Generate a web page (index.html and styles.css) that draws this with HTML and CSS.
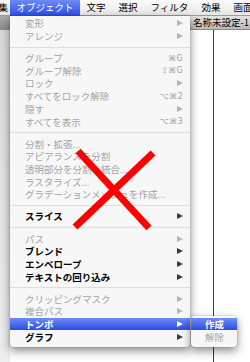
FILE: index.html
```html
<!DOCTYPE html>
<html lang="ja">
<head>
<meta charset="utf-8">
<link rel="stylesheet" href="styles.css">
</head>
<body>
<div class="screen">
  <div class="menubar">
    <span class="mb-item mb-first">編集</span>
    <span class="mb-item mb-active">オブジェクト</span>
    <span class="mb-item">文字</span>
    <span class="mb-item">選択</span>
    <span class="mb-item">フィルタ</span>
    <span class="mb-item">効果</span>
    <span class="mb-item">画面</span>
  </div>
  <div class="desktop">
    <div class="palette">
      <div class="palette-title"></div>
      <div class="palette-body"></div>
    </div>
    <div class="docwin">
      <div class="doc-title">名称未設定-1</div>
      <div class="doc-body"><div class="artboard"></div></div>
    </div>
  </div>

  <div class="menu">
    <div class="row dis"><span class="lbl">変形</span><span class="arr"></span></div>
    <div class="row dis"><span class="lbl">アレンジ</span><span class="arr"></span></div>
    <div class="sep"></div>
    <div class="row dis"><span class="lbl">グループ</span><span class="key">⌘G</span></div>
    <div class="row dis"><span class="lbl">グループ解除</span><span class="key">⇧⌘G</span></div>
    <div class="row dis"><span class="lbl">ロック</span><span class="arr"></span></div>
    <div class="row dis"><span class="lbl">すべてをロック解除</span><span class="key">⌥⌘2</span></div>
    <div class="row dis"><span class="lbl">隠す</span><span class="arr"></span></div>
    <div class="row dis"><span class="lbl">すべてを表示</span><span class="key">⌥⌘3</span></div>
    <div class="sep"></div>
    <div class="row dis"><span class="lbl">分割・拡張...</span></div>
    <div class="row dis"><span class="lbl">アピアランスを分割</span></div>
    <div class="row dis"><span class="lbl">透明部分を分割・統合...</span></div>
    <div class="row dis"><span class="lbl">ラスタライズ...</span></div>
    <div class="row dis"><span class="lbl">グラデーションメッシュを作成...</span></div>
    <div class="sep"></div>
    <div class="row"><span class="lbl">スライス</span><span class="arr"></span></div>
    <div class="sep"></div>
    <div class="row dis"><span class="lbl">パス</span><span class="arr"></span></div>
    <div class="row"><span class="lbl">ブレンド</span><span class="arr"></span></div>
    <div class="row"><span class="lbl">エンベロープ</span><span class="arr"></span></div>
    <div class="row"><span class="lbl">テキストの回り込み</span><span class="arr"></span></div>
    <div class="sep"></div>
    <div class="row dis"><span class="lbl">クリッピングマスク</span><span class="arr"></span></div>
    <div class="row dis"><span class="lbl">複合パス</span><span class="arr"></span></div>
    <div class="row sel"><span class="lbl">トンボ</span><span class="arr"></span></div>
    <div class="row"><span class="lbl">グラフ</span><span class="arr"></span></div>
  </div>

  <div class="submenu">
    <div class="row sel sub-row"><span class="lbl">作成</span></div>
    <div class="row dis sub-row"><span class="lbl">解除</span></div>
  </div>

  <svg class="cross" width="250" height="362" viewBox="0 0 250 362">
    <line x1="78" y1="151" x2="149" y2="228" stroke="#ff0000" stroke-width="7"/>
    <line x1="153" y1="153" x2="75" y2="227" stroke="#ff0000" stroke-width="7"/>
  </svg>
</div>
</body>
</html>
```

FILE: styles.css
```css
html, body {
  margin: 0;
  padding: 0;
  background: #ffffff;
}

.screen {
  position: relative;
  width: 250px;
  height: 362px;
  overflow: hidden;
  font-family: "Noto Sans CJK JP", "Noto Sans", sans-serif;
  display: flex;
  flex-direction: column;
}

.menubar {
  height: 16px;
  flex: none;
  display: flex;
  align-items: center;
  background: linear-gradient(#fbfbfb, #e6e6e6);
  border-bottom: 1px solid #9c9c9c;
  box-sizing: border-box;
  white-space: nowrap;
  font-size: 9.5px;
  color: #000;
}

.mb-item {
  height: 16px;
  line-height: 15px;
  padding: 0 6.5px;
  flex: none;
}

.mb-first {
  margin-left: -11px;
  padding: 0 2px 0 0;
}

.mb-active {
  color: #fff;
  background: linear-gradient(#6d8cf7, #2a4de6);
}

.desktop {
  flex: 1;
  display: flex;
  min-height: 0;
}

.palette {
  width: 10px;
  flex: none;
  display: flex;
  flex-direction: column;
}

.palette-title {
  height: 14px;
  background: linear-gradient(#a9a9a9, #8a8a8a);
}

.palette-body {
  flex: 1;
  background: linear-gradient(#d9d9d9, #eeeeee);
}

.docwin {
  flex: 1;
  display: flex;
  flex-direction: column;
  min-width: 0;
}

.doc-title {
  height: 14px;
  box-sizing: border-box;
  background: linear-gradient(#e3e3e3, #b9b9b9);
  border-bottom: 1px solid #8a8a8a;
  font-size: 9.5px;
  line-height: 13px;
  padding-left: 183px;
  white-space: nowrap;
  color: #000;
}

.doc-body {
  flex: 1;
  background: #ffffff;
  padding-left: 203px;
  display: flex;
}

.artboard {
  width: 0;
  border-left: 1px solid #3c3c3c;
}

.menu {
  position: absolute;
  left: 10px;
  top: 16px;
  width: 180px;
  padding: 1px 0 4px;
  background: #f7f7f7;
  border-radius: 0 0 4px 4px;
  box-shadow: 0 4px 10px rgba(0, 0, 0, 0.45), 0 0 2px rgba(0, 0, 0, 0.25);
  font-size: 9.5px;
}

.row {
  height: 12.7px;
  display: flex;
  align-items: center;
  padding: 0 7px 0 15px;
  color: #000;
  font-weight: 700;
  white-space: nowrap;
}

.row.dis {
  color: #a3a3a3;
  font-weight: 400;
}

.row.sel {
  color: #fff;
  background: linear-gradient(#6d8cf7, #2a4de6);
}

.lbl {
  flex: 1;
  line-height: 12px;
}

.key {
  font-family: "DejaVu Sans", sans-serif;
  font-size: 8px;
  font-weight: 400;
  color: #a3a3a3;
  letter-spacing: 0.3px;
}

.arr {
  width: 0;
  height: 0;
  border-left: 6px solid #3a3a3a;
  border-top: 3.5px solid transparent;
  border-bottom: 3.5px solid transparent;
}

.dis .arr {
  border-left-color: #b4b4b4;
}

.sel .arr {
  border-left-color: #ffffff;
}

.sep {
  height: 9.4px;
  display: flex;
  align-items: center;
}

.sep::before {
  content: "";
  flex: 1;
  height: 1px;
  background: #dedede;
}

.submenu {
  position: absolute;
  left: 191px;
  top: 315.6px;
  width: 46px;
  padding: 2px 0 4px;
  background: #f7f7f7;
  border-radius: 4px;
  box-shadow: 0 4px 10px rgba(0, 0, 0, 0.45), 0 0 2px rgba(0, 0, 0, 0.25);
  font-size: 9.5px;
}

.sub-row {
  padding: 0 6px 0 14px;
}

.cross {
  position: absolute;
  left: 0;
  top: 0;
  pointer-events: none;
}
```
